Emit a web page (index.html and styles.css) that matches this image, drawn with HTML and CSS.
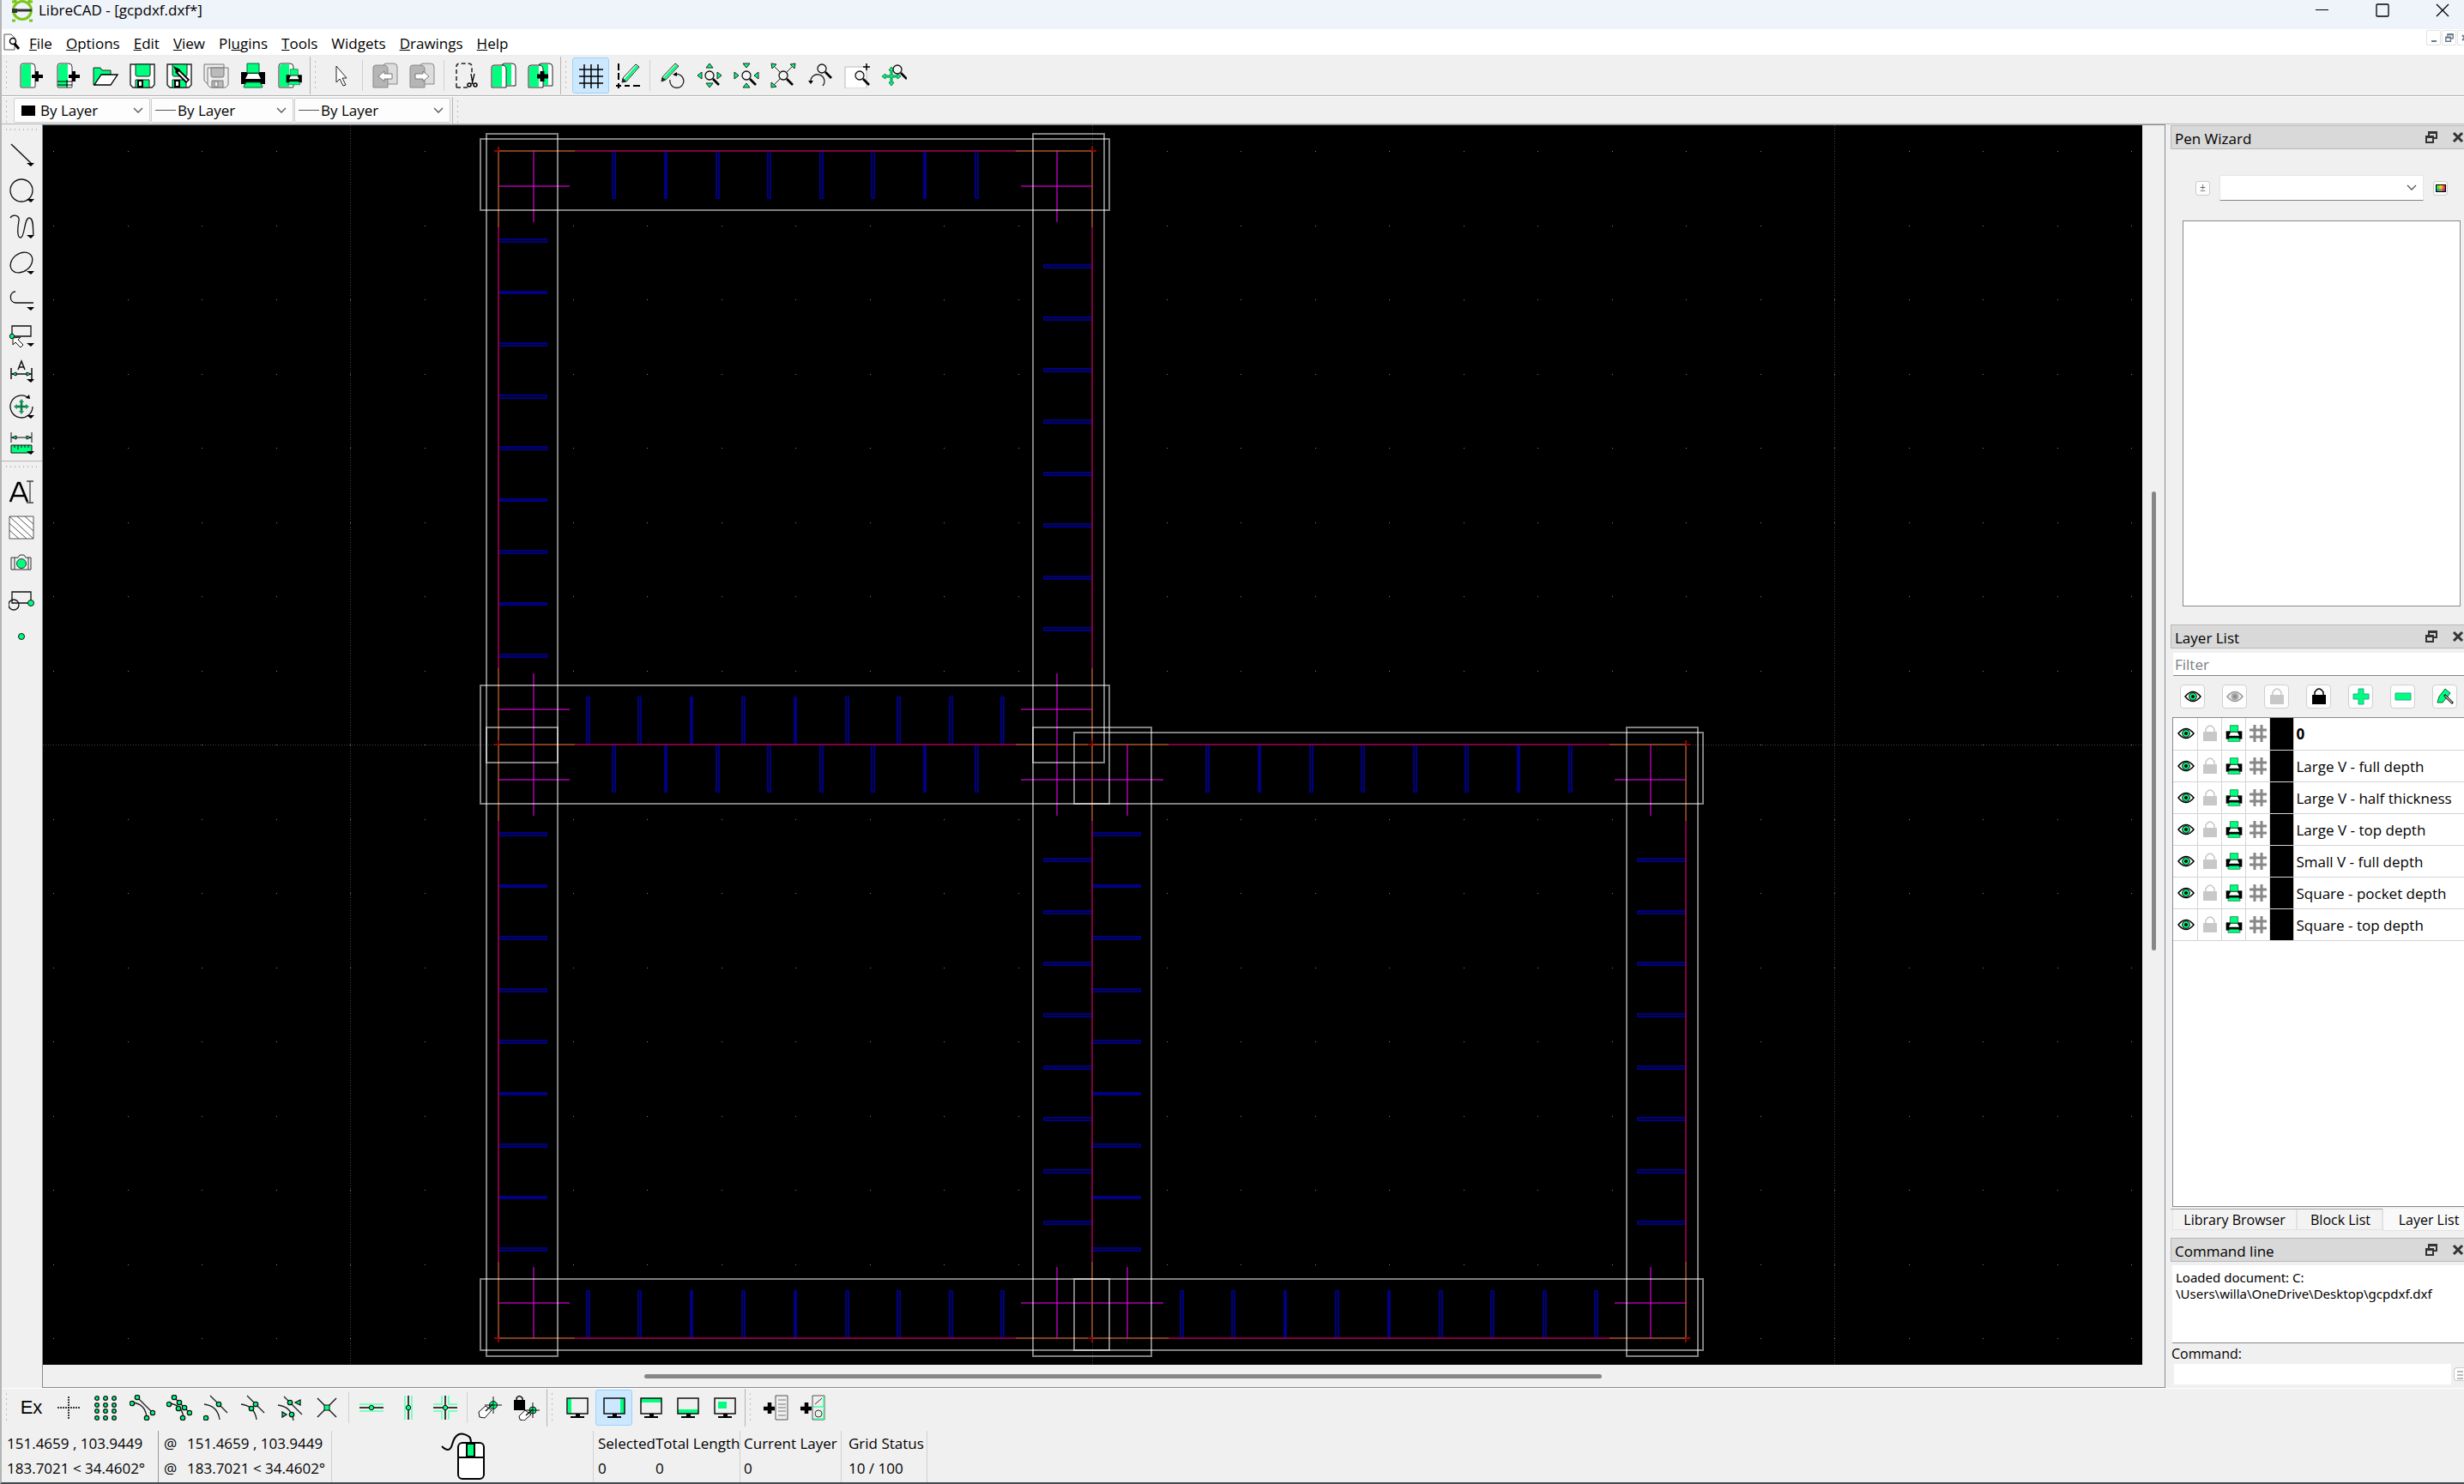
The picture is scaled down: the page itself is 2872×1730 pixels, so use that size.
FILE: index.html
```html
<!DOCTYPE html>
<html lang="en">
<head>
<meta charset="utf-8">
<title>LibreCAD - [gcpdxf.dxf*]</title>
<link rel="stylesheet" href="styles.css">
</head>
<body>
<svg class="sprite" aria-hidden="true">
  <defs>
    <symbol id="i-new" viewBox="0 0 30 30"><path d="M2 4q0-3 3-3h10q4 0 4 4v23q0 1-1 1H3q-1 0-1-1z" fill="#fff" stroke="#333"/><path d="M3 5q0-3 3-3h8v26H3z" fill="#00ff7f"/><path d="M21 10v12M15 16h13" stroke="#000" stroke-width="4"/></symbol>
    <symbol id="i-newt" viewBox="0 0 30 30"><path d="M2 4q0-3 3-3h10q4 0 4 4v23q0 1-1 1H3q-1 0-1-1z" fill="#fff" stroke="#333"/><path d="M3 5q0-3 3-3h8v26H3z" fill="#00ff7f"/><path d="M2 22h17M2 26h17M13 20v9" stroke="#000"/><path d="M21 10v12M15 16h13" stroke="#000" stroke-width="4"/></symbol>
    <symbol id="i-open" viewBox="0 0 30 30"><path d="M1 26V6h8l2 3h10v5H10L2 26z" fill="#00ff7f" stroke="#222"/><path d="M2 26l8-12h19l-8 12z" fill="#fff" stroke="#000" stroke-width="1.3"/></symbol>
    <symbol id="i-save" viewBox="0 0 30 30"><path d="M1 2h28v24l-3 3H4l-3-3z" fill="#fff" stroke="#222" stroke-width="1.4"/><path d="M7 2h17v12q0 2-2 2H9q-2 0-2-2z" fill="#00ff7f" stroke="#222"/><path d="M7 29v-9h16v9z" fill="#00ff7f" stroke="#222"/><path d="M10 21h5v7h-5z" fill="#fff" stroke="#000" stroke-width="2"/></symbol>
    <symbol id="i-saveas" viewBox="0 0 30 30"><use href="#i-save"/><path d="M12 9l13 13" stroke="#000" stroke-width="6"/><path d="M8 4l8 4-4 4z" fill="#000"/><path d="M14 11l10 10" stroke="#fff" stroke-width="2"/></symbol>
    <symbol id="i-saveall" viewBox="0 0 30 30"><path d="M1 2h23v22H4l-3-3z" fill="#eee" stroke="#777"/><path d="M5 6h24v20l-3 3H8l-3-3z" fill="#eee" stroke="#777"/><path d="M9 6h15v9q0 2-2 2H11q-2 0-2-2zM10 29v-8h13v8z" fill="#bbb" stroke="#777"/><path d="M13 22h4v6h-4z" fill="#eee" stroke="#777"/></symbol>
    <symbol id="i-print" viewBox="0 0 30 30"><path d="M1 11h28v14H1z"/><path d="M8 1h14v11H8z" fill="#00ff7f" stroke="#063"/><path d="M9 13h12l3 6H6z" fill="#fff"/><path d="M7 23h16l3 5q0 1-1 1H5q-1 0-1-1z" fill="#00ff7f" stroke="#063"/></symbol>
    <symbol id="i-preview" viewBox="0 0 30 30"><path d="M2 4q0-3 3-3h10q4 0 4 4v23q0 1-1 1H3q-1 0-1-1z" fill="#fff" stroke="#333"/><path d="M3 5q0-3 3-3h8v26H3z" fill="#00ff7f"/><g transform="translate(10 7) scale(.65)"><use href="#i-print" width="30" height="30"/></g></symbol>
    <symbol id="i-pointer" viewBox="0 0 30 30"><path d="M10 4v19l4-4 4 8 3-1-4-8h5z" fill="#fff" stroke="#222"/></symbol>
    <symbol id="i-undo" viewBox="0 0 30 30"><path d="M13 4q0-3 3-3h9q4 0 4 4v20H13z" fill="#ddd" stroke="#888"/><path d="M1 6q0-3 3-3h9q5 0 5 5v21H1z" fill="#b5b5b5" stroke="#888"/><path d="M7 16l7-6v3h9v6h-9v3z" fill="#fff" stroke="#777"/></symbol>
    <symbol id="i-redo" viewBox="0 0 30 30"><path d="M13 4q0-3 3-3h9q4 0 4 4v20H13z" fill="#ddd" stroke="#888"/><path d="M1 6q0-3 3-3h9q5 0 5 5v21H1z" fill="#b5b5b5" stroke="#888"/><path d="M23 16l-7-6v3H7v6h9v3z" fill="#fff" stroke="#777"/></symbol>
    <symbol id="i-cut" viewBox="0 0 30 30"><path d="M3 29V5q0-4 4-4h10q4 0 4 4v9M3 29h15" fill="none" stroke="#222" stroke-width="1.5" stroke-dasharray="5 3"/><path d="M20 13l2 12M24 13l-3 12" stroke="#000" stroke-width="1.3"/><circle cx="18" cy="26" r="2" fill="none" stroke="#000" stroke-width="1.5"/><circle cx="25" cy="26" r="2" fill="none" stroke="#000" stroke-width="1.5"/></symbol>
    <symbol id="i-copy" viewBox="0 0 30 30"><path d="M13 4q0-3 3-3h9q4 0 4 4v22H13z" fill="#fff" stroke="#222"/><path d="M14 2h10v24H14z" fill="#00ff7f"/><path d="M1 6q0-3 3-3h9q5 0 5 5v21H1z" fill="#fff" stroke="#222"/><path d="M2 6q0-2 2-2h9v24H2z" fill="#00ff7f"/></symbol>
    <symbol id="i-paste" viewBox="0 0 30 30"><use href="#i-copy"/><path d="M17 10v12M11 16h13" stroke="#000" stroke-width="5"/></symbol>
    <symbol id="i-grid" viewBox="0 0 30 30"><path d="M7 2v28M15 2v28M23 2v28M1 8h28M1 16h28M1 24h28" stroke="#000" stroke-width="1.5"/></symbol>
    <symbol id="i-draft" viewBox="0 0 30 30"><path d="M4 1v8M4 12v8M4 24v6M1 27h6M11 27h6M21 27h8" stroke="#000" stroke-width="2"/><path d="M24 2l4 3-15 17-5 1 1-5z" fill="#fff" stroke="#222"/><path d="M26 4L11 21" stroke="#00ff7f" stroke-width="3"/><path d="M8 23l1-5 4 4z" fill="#222"/></symbol>
    <symbol id="i-redraw" viewBox="0 0 30 30"><path d="M18 1l4 3L7 20l-5 2 1-5z" fill="#fff" stroke="#222"/><path d="M20 3L5 19" stroke="#00ff7f" stroke-width="3"/><path d="M2 22l1-5 4 3z" fill="#222"/><path d="M17 14a8 8 0 1 1-5 6" fill="none" stroke="#222" stroke-width="1.3"/><path d="M15 14l5-3v5z"/></symbol>
    <symbol id="lens" viewBox="0 0 30 30"><circle cx="15" cy="15" r="5" fill="#f4f4f4" stroke="#111" stroke-width="1.3"/><path d="M19 19l7 7" stroke="#000" stroke-width="2.6"/></symbol>
    <symbol id="i-zin" viewBox="0 0 30 30"><use href="#lens"/><path d="M15 1l4 5h-8zM15 29l4-5h-8zM1 15l5-4v8zM29 15l-5-4v8z" fill="#00ff7f" stroke="#222"/></symbol>
    <symbol id="i-zout" viewBox="0 0 30 30"><use href="#lens"/><path d="M15 6l4-5h-8zM15 24l4 5h-8zM6 15l-5-4v8zM24 15l5-4v8z" fill="#00ff7f" stroke="#222"/></symbol>
    <symbol id="i-zauto" viewBox="0 0 30 30"><path d="M3 3l9 9M27 3l-9 9M3 27l9-9" stroke="#222"/><use href="#lens"/><path d="M1 1l6 1-5 5zM29 1l-6 1 5 5zM1 29v-6l6 5z" fill="#00ff7f" stroke="#222"/></symbol>
    <symbol id="i-zprev" viewBox="0 0 30 30"><g transform="translate(2 -8)"><use href="#lens" width="30" height="30"/></g><path d="M4 23a8 8 0 1 1 14 4" fill="none" stroke="#222" stroke-width="1.3"/><path d="M1 21h6l-3 4z"/></symbol>
    <symbol id="i-zwin" viewBox="0 0 30 30"><path d="M1 5h25v25H1z" fill="#fff" stroke="#bbb"/><g transform="translate(3 0)"><use href="#lens" width="30" height="30"/></g><path d="M26 1v8M22 5h8" stroke="#000" stroke-width="1.5"/></symbol>
    <symbol id="i-zpan" viewBox="0 0 30 30"><path d="M12 5l3 4h-2v6h6v-2l4 3-4 3v-2h-6v6h2l-3 4-3-4h2v-6H5v2l-4-3 4-3v2h6V9H9z" fill="#00ff7f" stroke="#084"/><g transform="translate(4 -7)"><use href="#lens" width="30" height="30"/></g></symbol>

    <symbol id="drop" viewBox="0 0 30 30"><path d="M21 25h9l-4 4z"/></symbol>
    <symbol id="i-line" viewBox="0 0 30 30"><path d="M3 3l24 23" stroke="#111" stroke-width="1.5"/><use href="#drop"/></symbol>
    <symbol id="i-circle" viewBox="0 0 30 30"><circle cx="15" cy="15" r="13" fill="none" stroke="#111" stroke-width="1.3"/><use href="#drop"/></symbol>
    <symbol id="i-curve" viewBox="0 0 30 30"><path d="M2 5c3-5 11-3 10 3s-3 20 2 20S18 5 24 5s4 15 5 20" fill="none" stroke="#111" stroke-width="1.3"/><use href="#drop"/></symbol>
    <symbol id="i-ellipse" viewBox="0 0 30 30"><ellipse cx="15" cy="15" rx="14" ry="10.500" transform="rotate(-38 15 15)" fill="none" stroke="#111" stroke-width="1.3"/><use href="#drop"/></symbol>
    <symbol id="i-poly" viewBox="0 0 30 30"><path d="M8 7c-7 0-8 12 0 13h21" fill="none" stroke="#111" stroke-width="1.3"/><use href="#drop"/></symbol>
    <symbol id="i-select" viewBox="0 0 30 30"><path d="M4 5h22v12H4z" fill="none" stroke="#111" stroke-width="1.3"/><circle cx="4" cy="17" r="2.700" fill="#00ff7f" stroke="#111"/><path d="M5 19l9-1-3 3 6 6-3 3-6-6-3 3z" fill="#fff" stroke="#111"/><use href="#drop"/></symbol>
    <symbol id="i-dim" viewBox="0 0 30 30"><path d="M3 12v13M27 12v13M3 19h24M11 14l4-10 4 10M12 11h6" fill="none" stroke="#111" stroke-width="1.500"/><path d="M4 19l5-2v4zM26 19l-5-2v4z" fill="#00ff7f" stroke="#111"/><use href="#drop"/></symbol>
    <symbol id="i-modify" viewBox="0 0 30 30"><path d="M28 15a13 13 0 1 1-6-11" fill="none" stroke="#111" stroke-width="1.300"/><path d="M25 6l-5-1 4-4z"/><path d="M15 8v14M8 15h14" stroke="#087a45" stroke-width="2.500"/><path d="M15 6l3 4h-6zM15 24l3-4h-6zM6 15l4-3v6zM24 15l-4-3v6z" fill="#1c9b60"/><use href="#drop"/></symbol>
    <symbol id="i-measure" viewBox="0 0 30 30"><path d="M3 3v12M27 3v12M3 9h24" stroke="#111"/><path d="M4 9l5-2v4zM26 9l-5-2v4z" fill="#00ff7f" stroke="#111"/><path d="M3 18h24v9H3z" fill="#00ff7f" stroke="#111"/><path d="M7 18v3M11 18v5M15 18v3M19 18v3M23 18v3" stroke="#111"/><use href="#drop"/></symbol>
    <symbol id="i-text" viewBox="0 0 30 30"><path d="M2 27L11 5h2l9 22M5 20h14" fill="none" stroke="#000" stroke-width="2.600"/><path d="M25 3v25M21 3h8M21 28h8" stroke="#444" stroke-width="1.300"/></symbol>
    <symbol id="i-hatch" viewBox="0 0 30 30"><path d="M1 2h28v26H1z" fill="#fff" stroke="#555"/><path d="M1 18l11 10M1 10l20 18M1 2l28 26M10 2l19 17M19 2l10 9" stroke="#555"/></symbol>
    <symbol id="i-image" viewBox="0 0 30 30"><path d="M3 8h8l2-3h5l2 3h6v14H3zM7 8v14M23 8v14" fill="#eee" stroke="#333"/><circle cx="15" cy="15" r="5.500" fill="#00ff7f" stroke="#333"/></symbol>
    <symbol id="i-block" viewBox="0 0 30 30"><path d="M4 6h22v13H4z" fill="none" stroke="#111" stroke-width="1.300"/><circle cx="6" cy="21" r="6" fill="none" stroke="#111" stroke-width="1.300"/><circle cx="26" cy="19" r="3.500" fill="#00ff7f" stroke="#111"/></symbol>
    <symbol id="i-point" viewBox="0 0 30 30"><circle cx="15" cy="16" r="3.500" fill="#00ff7f" stroke="#111"/></symbol>

    <symbol id="i-cross" viewBox="0 0 30 30"><path d="M15 2v26M2 15h26" stroke="#000" stroke-width="1.500" stroke-dasharray="2 1"/></symbol>
    <symbol id="i-dots" viewBox="0 0 30 30"><g fill="#00ff7f" stroke="#111" stroke-width="1.300"><circle cx="5" cy="4" r="2.300"/><circle cx="15" cy="4" r="2.300"/><circle cx="25" cy="4" r="2.300"/><circle cx="5" cy="12" r="2.300"/><circle cx="15" cy="12" r="2.300"/><circle cx="25" cy="12" r="2.300"/><circle cx="5" cy="19" r="2.300"/><circle cx="15" cy="19" r="2.300"/><circle cx="25" cy="19" r="2.300"/><circle cx="5" cy="27" r="2.300"/><circle cx="15" cy="27" r="2.300"/><circle cx="25" cy="27" r="2.300"/></g></symbol>
    <symbol id="i-send" viewBox="0 0 30 30"><path d="M9 3l18 18M3 9q15 1 17 17" fill="none" stroke="#222" stroke-width="1.300"/><g fill="#00ff7f" stroke="#111" stroke-width="1.300"><circle cx="9" cy="3" r="2.700"/><circle cx="27" cy="21" r="2.700"/><circle cx="3" cy="10" r="2.700"/><circle cx="20" cy="27" r="2.700"/></g></symbol>
    <symbol id="i-son" viewBox="0 0 30 30"><path d="M9 3l18 18M3 10q15 1 17 17" fill="none" stroke="#222" stroke-width="1.300"/><g fill="#00ff7f" stroke="#111" stroke-width="1.300"><circle cx="9" cy="3" r="2.700"/><circle cx="15" cy="9" r="2.700"/><circle cx="21" cy="15" r="2.700"/><circle cx="27" cy="21" r="2.700"/><circle cx="3" cy="11" r="2.700"/><circle cx="14" cy="16" r="2.700"/><circle cx="19" cy="27" r="2.700"/></g></symbol>
    <symbol id="i-scen" viewBox="0 0 30 30"><path d="M8 1l20 20M1 11q16 2 18 18" fill="none" stroke="#222" stroke-width="1.300"/><g fill="#00ff7f" stroke="#111" stroke-width="1.300"><circle cx="18" cy="11" r="2.700"/><circle cx="3" cy="27" r="2.700"/></g></symbol>
    <symbol id="i-smid" viewBox="0 0 30 30"><path d="M8 1l20 20M1 11q16 2 18 18" fill="none" stroke="#222" stroke-width="1.300"/><g fill="#00ff7f" stroke="#111" stroke-width="1.300"><circle cx="18" cy="11" r="2.700"/><circle cx="13" cy="16" r="2.700"/></g></symbol>
    <symbol id="i-sdist" viewBox="0 0 30 30"><path d="M8 2l21 21M1 12q16 2 18 18" fill="none" stroke="#222" stroke-width="1.300"/><g fill="#00ff7f" stroke="#111" stroke-width="1.300"><circle cx="15" cy="9" r="2.700"/><circle cx="17" cy="23" r="2.700"/><path d="M21 9l6-3v6zM11 23l-5-3v6z"/></g></symbol>
    <symbol id="i-sint" viewBox="0 0 30 30"><path d="M4 4l22 22M26 4L4 26" stroke="#111" stroke-width="1.300"/><path d="M12 12h6v6h-6z" fill="#00ff7f" stroke="#111"/></symbol>
    <symbol id="i-rhor" viewBox="0 0 30 30"><path d="M1 11h28M1 19h28" stroke="#7dffc0" stroke-width="2"/><path d="M1 15h28" stroke="#000" stroke-width="1.500"/><circle cx="15" cy="15" r="2.700" fill="#00ff7f" stroke="#111"/></symbol>
    <symbol id="i-rver" viewBox="0 0 30 30"><path d="M11 1v28M19 1v28" stroke="#7dffc0" stroke-width="2"/><path d="M15 1v28" stroke="#000" stroke-width="1.500"/><circle cx="15" cy="15" r="2.700" fill="#00ff7f" stroke="#111"/></symbol>
    <symbol id="i-rort" viewBox="0 0 30 30"><path d="M11 1v10H1M19 1v10h10M11 29V19H1M19 29V19h10" fill="none" stroke="#7dffc0" stroke-width="2"/><path d="M15 1v28M1 15h28" stroke="#000" stroke-width="1.500"/><circle cx="15" cy="15" r="2.700" fill="#00ff7f" stroke="#111"/></symbol>
    <symbol id="i-rel" viewBox="0 0 30 30"><circle cx="19" cy="12" r="4.500" fill="#00ff7f" stroke="#111"/><path d="M19 2v20M9 12h20" stroke="#111"/><path d="M2 20l8-7 7 5-8 9-6-1z" fill="#fff" stroke="#111"/><path d="M10 19l8-8" stroke="#111" stroke-width="1.500"/></symbol>
    <symbol id="i-relock" viewBox="0 0 30 30"><path d="M3 7V4q3-5 7 0v3" fill="none" stroke="#111" stroke-width="1.500"/><path d="M0 6h13v12H0z"/><circle cx="22" cy="18" r="4" fill="#00ff7f" stroke="#111"/><path d="M22 9v18M13 18h17" stroke="#111"/><path d="M6 25l7-7 7 5-8 7-5-1z" fill="#fff" stroke="#111"/><path d="M14 24l8-7" stroke="#111" stroke-width="1.500"/></symbol>
    <symbol id="mon" viewBox="0 0 30 30"><path d="M3 4h24v18H3z" fill="none" stroke="#111" stroke-width="1.500"/><path d="M13 22h5v3h-5z"/><path d="M7 26h16" stroke="#000" stroke-width="2"/></symbol>
    <symbol id="i-dl" viewBox="0 0 30 30"><path d="M4 4h4v18H4z" fill="#00ff7f"/><use href="#mon"/></symbol>
    <symbol id="i-dr" viewBox="0 0 30 30"><path d="M22 4h5v18h-5z" fill="#00ff7f"/><use href="#mon"/></symbol>
    <symbol id="i-dt" viewBox="0 0 30 30"><path d="M3 4h24v5H3z" fill="#00ff7f"/><use href="#mon"/></symbol>
    <symbol id="i-db" viewBox="0 0 30 30"><path d="M3 17h24v5H3z" fill="#00ff7f"/><use href="#mon"/></symbol>
    <symbol id="i-df" viewBox="0 0 30 30"><path d="M7 8h10v8H7z" fill="#00ff7f"/><use href="#mon"/></symbol>
    <symbol id="i-addm" viewBox="0 0 30 30"><path d="M1 16h13M8 9v13" stroke="#000" stroke-width="4.500"/><path d="M15 1h14v28H15z" fill="#eee" stroke="#555"/><path d="M18 6h9M18 11h9M18 15h9M18 19h9M18 24h9" stroke="#777"/></symbol>
    <symbol id="i-addt" viewBox="0 0 30 30"><path d="M1 16h13M8 9v13" stroke="#000" stroke-width="4.500"/><path d="M15 1h14v28H15z" fill="#eee" stroke="#555"/><path d="M16 14h12V2M16 28h12V17" fill="none" stroke="#3dff9c" stroke-width="1.500"/><path d="M18 11l8-7" stroke="#333"/><circle cx="22" cy="22" r="4" fill="none" stroke="#333"/></symbol>
    <symbol id="i-eye" viewBox="0 0 20 20"><path d="M1 10q9-11 18 0q-9 11-18 0z" fill="#fff" stroke="#000" stroke-width="1.500"/><circle cx="10" cy="10" r="4.300" fill="#00ff7f" stroke="#000"/><circle cx="10" cy="10" r="2"/></symbol>
    <symbol id="i-eyeoff" viewBox="0 0 20 20"><path d="M1 10q9-11 18 0q-9 11-18 0z" fill="#eee" stroke="#999" stroke-width="1.500"/><circle cx="10" cy="10" r="4.500" fill="#aaa"/><circle cx="10" cy="10" r="2" fill="#888"/></symbol>
    <symbol id="i-lock" viewBox="0 0 20 20"><path d="M5 10V5q5-8 10 0v5" fill="none" stroke="currentColor" stroke-width="1.500"/><path d="M2 8h16v11H2z" fill="currentColor"/></symbol>
    <symbol id="i-hash" viewBox="0 0 20 20"><path d="M6 0v20M14 0v20M0 6h20M0 14h20" stroke="#888" stroke-width="3"/></symbol>
    <symbol id="i-plus" viewBox="0 0 20 20"><path d="M7 1h6v6h6v6h-6v6H7v-6H1V7h6z" fill="#00ff7f" stroke="#2a9"/></symbol>
    <symbol id="i-minus" viewBox="0 0 20 20"><path d="M1 6h18v8H1z" fill="#00ff7f" stroke="#2a9"/></symbol>
    <symbol id="i-edit" viewBox="0 0 20 20"><path d="M10 1l6 5-9 11H1l2-7z" fill="#00ff7f" stroke="#063"/><path d="M9 8l10 10" stroke="#222" stroke-width="3"/><path d="M10 9l8 8" stroke="#fff"/></symbol>
    <symbol id="i-float" viewBox="0 0 14 14"><path d="M4 5V1h9v7H9M4 2h9" fill="none" stroke="currentColor" stroke-width="2"/><path d="M1 6h8v7H1zM1 7h8" fill="none" stroke="currentColor" stroke-width="2"/></symbol>
    <symbol id="i-x" viewBox="0 0 14 14"><path d="M2 2l10 10M12 2L2 12" stroke="#333" stroke-width="3"/></symbol>
    <symbol id="i-chev" viewBox="0 0 14 14"><path d="M2 4l5 5 5-5" fill="none" stroke="#555" stroke-width="1.300"/></symbol>
  </defs>
</svg>

<header class="titlebar">
  <svg class="logo" viewBox="0 0 26 26"><circle cx="13" cy="12" r="10.500" fill="none" stroke="#7cc618" stroke-width="3"/><path d="M1 2h4v-2M25 2h-4v-2M1 24h4M21 24h4" stroke="#7cc618" stroke-width="3"/><path d="M1 12h23" stroke="#333" stroke-width="3"/><path d="M1 10h6v5H1z" fill="#333"/></svg>
  <h1>LibreCAD - [gcpdxf.dxf*]</h1>
  <div class="wincontrols">
    <button aria-label="Minimize"><svg viewBox="0 0 16 16"><path d="M0 7.500h15" stroke="#000"/></svg></button>
    <button aria-label="Maximize"><svg viewBox="0 0 16 16"><rect x="1" y="1" width="14" height="14" rx="1" fill="none" stroke="#000" stroke-width="1.300"/></svg></button>
    <button aria-label="Close"><svg viewBox="0 0 16 16"><path d="M1 1l14 14M15 1L1 15" stroke="#000" stroke-width="1.300"/></svg></button>
  </div>
</header>

<nav class="menubar">
  <svg class="docicon" viewBox="0 0 20 20"><path d="M1 1h8l4 4v14H1z" fill="#fff" stroke="#555"/><circle cx="11" cy="9" r="3.500" fill="#fff" stroke="#000" stroke-width="1.500"/><path d="M13 12l5 6" stroke="#000" stroke-width="3"/></svg>
  <button><u>F</u>ile</button><button><u>O</u>ptions</button><button><u>E</u>dit</button><button><u>V</u>iew</button><button>Pl<u>u</u>gins</button><button><u>T</u>ools</button><button>Widgets</button><button><u>D</u>rawings</button><button><u>H</u>elp</button>
  <div class="mdi">
    <button aria-label="Minimize document"><svg viewBox="0 0 14 14"><path d="M4 11h6" stroke="#6a7a8c" stroke-width="2"/></svg></button>
    <button aria-label="Restore document"><svg viewBox="-3 -3 20 20"><use href="#i-float" width="14" height="14"/></svg></button>
    <button class="cut" aria-label="Close document"><svg viewBox="0 0 14 14"><path d="M5 4l6 6M11 4l-6 6" stroke="#6a7a8c" stroke-width="2"/></svg></button>
  </div>
</nav>

<div class="toolrow">
  <div class="toolbar">
    <i class="handle"></i>
    <button aria-label="New"><svg><use href="#i-new"/></svg></button>
    <button aria-label="New from template"><svg><use href="#i-newt"/></svg></button>
    <button aria-label="Open"><svg><use href="#i-open"/></svg></button>
    <button aria-label="Save"><svg><use href="#i-save"/></svg></button>
    <button aria-label="Save as"><svg><use href="#i-saveas"/></svg></button>
    <button aria-label="Save all"><svg><use href="#i-saveall"/></svg></button>
    <button aria-label="Print"><svg><use href="#i-print"/></svg></button>
    <button aria-label="Print preview"><svg><use href="#i-preview"/></svg></button>
  </div>
  <div class="toolbar">
    <i class="handle"></i>
    <button aria-label="Selection pointer"><svg><use href="#i-pointer"/></svg></button>
    <i class="sep"></i>
    <button aria-label="Undo"><svg><use href="#i-undo"/></svg></button>
    <button aria-label="Redo"><svg><use href="#i-redo"/></svg></button>
    <i class="sep"></i>
    <button aria-label="Cut"><svg><use href="#i-cut"/></svg></button>
    <button aria-label="Copy"><svg><use href="#i-copy"/></svg></button>
    <button aria-label="Paste"><svg><use href="#i-paste"/></svg></button>
  </div>
  <div class="toolbar last">
    <i class="handle"></i>
    <button class="on" aria-label="Grid"><svg><use href="#i-grid"/></svg></button>
    <button aria-label="Draft"><svg><use href="#i-draft"/></svg></button>
    <i class="sep"></i>
    <button aria-label="Redraw"><svg><use href="#i-redraw"/></svg></button>
    <button aria-label="Zoom in"><svg><use href="#i-zin"/></svg></button>
    <button aria-label="Zoom out"><svg><use href="#i-zout"/></svg></button>
    <button aria-label="Auto zoom"><svg><use href="#i-zauto"/></svg></button>
    <button aria-label="Previous view"><svg><use href="#i-zprev"/></svg></button>
    <button aria-label="Window zoom"><svg><use href="#i-zwin"/></svg></button>
    <button aria-label="Zoom panning"><svg><use href="#i-zpan"/></svg></button>
  </div>
</div>

<div class="penrow">
  <div class="pens">
    <i class="handle"></i>
    <label class="combo c1"><span class="swatch"></span><select aria-label="Color"><option>By Layer</option></select><svg><use href="#i-chev"/></svg></label>
    <label class="combo c2"><span class="dash"></span><select aria-label="Width"><option>By Layer</option></select><svg><use href="#i-chev"/></svg></label>
    <label class="combo c3"><span class="dash"></span><select aria-label="Line type"><option>By Layer</option></select><svg><use href="#i-chev"/></svg></label>
  </div>
  <i class="handle"></i>
</div>

<main>
  <aside class="tools">
    <div class="toolcol">
      <i class="hhandle"></i>
      <button aria-label="Line"><svg><use href="#i-line"/></svg></button>
      <button aria-label="Circle"><svg><use href="#i-circle"/></svg></button>
      <button aria-label="Curve"><svg><use href="#i-curve"/></svg></button>
      <button aria-label="Ellipse"><svg><use href="#i-ellipse"/></svg></button>
      <button aria-label="Polyline"><svg><use href="#i-poly"/></svg></button>
      <button aria-label="Select"><svg><use href="#i-select"/></svg></button>
      <button aria-label="Dimension"><svg><use href="#i-dim"/></svg></button>
      <button aria-label="Modify"><svg><use href="#i-modify"/></svg></button>
      <button aria-label="Info"><svg><use href="#i-measure"/></svg></button>
    </div>
    <div class="toolcol">
      <i class="hhandle"></i>
      <button aria-label="Text"><svg><use href="#i-text"/></svg></button>
      <button aria-label="Hatch"><svg><use href="#i-hatch"/></svg></button>
      <button aria-label="Image"><svg><use href="#i-image"/></svg></button>
      <button aria-label="Block"><svg><use href="#i-block"/></svg></button>
      <button aria-label="Point"><svg><use href="#i-point"/></svg></button>
    </div>
  </aside>

  <section class="view">
    <svg class="drawing" viewBox="50 146 2447 1445" preserveAspectRatio="xMidYMid slice" role="img" aria-label="Drawing">
      <defs>
        <pattern id="gdots" x="62" y="176" width="173" height="173" patternUnits="userSpaceOnUse"><path d="M0 0h1v1h-1zM87 0h1v1h-1zM0 87h1v1h-1zM87 87h1v1h-1z" fill="#808080"/></pattern>
        <g id="cell" fill="none" stroke-width="2">
          <g stroke="#000082">
            <path d="M133 1v54h3V1M194 1v54h2V1M254 1v54h3V1M314 1v54h3V1M375 1v54h3V1M435 1v54h3V1M496 1v54h2V1M556 1v54h3V1"/>
            <path d="M103 691v-54h3v54M163 691v-54h3v54M224 691v-54h2v54M284 691v-54h3v54M345 691v-54h2v54M405 691v-54h3v54M465 691v-54h3v54M526 691v-54h3v54M586 691v-54h3v54"/>
            <path d="M1 103h55v3H1M1 164h55v2H1M1 224h55v3H1M1 285h55v3H1M1 345h55v3H1M1 406h55v2H1M1 466h55v3H1M1 527h55v2H1M1 587h55v3H1"/>
            <path d="M691 133h-55v3h55M691 194h-55v3h55M691 254h-55v3h55M691 314h-55v3h55M691 375h-55v3h55M691 435h-55v3h55M691 496h-55v3h55M691 556h-55v3h55"/>
          </g>
          <path d="M0 0h692v692H0z" stroke="#800040"/>
          <path d="M0 89V0h89M603 0h89v89M692 603v89h-89M89 692H0v-89" stroke="#804020"/>
          <g stroke="#f0f" stroke-opacity=".5"><path d="M41 0v83"/><path d="M0 41h83"/><path d="M651 0v83"/><path d="M609 41h83"/><path d="M41 609v83"/><path d="M0 651h83"/><path d="M651 609v83"/><path d="M609 651h83"/></g>
          <path d="M-5 0h5M0-5v5M692-5v5M692 0h5M-5 692h5M0 692v5M692 692h5M692 692v5" stroke="#900"/>
        </g>
      </defs>
      <rect x="50" y="146" width="2447" height="1445"/>
      <rect x="50" y="146" width="2447" height="1445" fill="url(#gdots)"/>
      <path d="M408.500 146v1445M1273.500 146v1445M2138.500 146v1445M50 868.500h2447" stroke="#444" stroke-dasharray="1 2"/>
      <use href="#cell" x="581" y="176"/><use href="#cell" x="581" y="868"/><use href="#cell" x="1273" y="868"/>
      <g fill="none" stroke="#fff" stroke-opacity=".5" stroke-width="2">
        <path d="M567 156h83v733h-83z"/><path d="M1204 156h83v733h-83z"/><path d="M560 162h733v83H560z"/>
        <path d="M560 799h733v138H560z"/><path d="M1252 854h733v83h-733z"/>
        <path d="M567 848h83v733h-83z"/><path d="M1204 848h138v733h-138z"/><path d="M1896 848h83v733h-83z"/>
        <path d="M560 1491h733v83H560z"/><path d="M1252 1491h733v83h-733z"/>
      </g>
    </svg>
    <div class="vscroll"><i></i></div>
    <div class="hscroll"><i></i></div>
  </section>

  <aside class="dock">
    <header class="docktitle"><h2>Pen Wizard</h2><button aria-label="Float"><svg><use href="#i-float"/></svg></button><button aria-label="Close"><svg><use href="#i-x"/></svg></button></header>
    <div class="penbody">
      <div class="penpick">
        <button class="mini" aria-label="Add to favourites">±</button>
        <label class="combo wide"><select aria-label="Pen colour"><option></option></select><svg><use href="#i-chev"/></svg></label>
        <button class="mini" aria-label="Pick colour"><i class="rainbow"></i></button>
      </div>
      <div class="penlist"></div>
    </div>

    <header class="docktitle"><h2>Layer List</h2><button aria-label="Float"><svg><use href="#i-float"/></svg></button><button aria-label="Close"><svg><use href="#i-x"/></svg></button></header>
    <input class="filter" type="text" placeholder="Filter" aria-label="Filter">
    <div class="layerbtns">
      <button aria-label="Show all"><svg><use href="#i-eye"/></svg></button>
      <button aria-label="Hide all"><svg><use href="#i-eyeoff"/></svg></button>
      <button class="pale" aria-label="Unlock all"><svg><use href="#i-lock"/></svg></button>
      <button aria-label="Lock all"><svg><use href="#i-lock"/></svg></button>
      <button aria-label="Add layer"><svg><use href="#i-plus"/></svg></button>
      <button aria-label="Remove layer"><svg><use href="#i-minus"/></svg></button>
      <button aria-label="Edit layer"><svg><use href="#i-edit"/></svg></button>
    </div>
    <div class="layers">
      <table>
        <tbody>
          <tr><td><svg><use href="#i-eye"/></svg></td><td class="pale"><svg><use href="#i-lock"/></svg></td><td><svg><use href="#i-print"/></svg></td><td><svg><use href="#i-hash"/></svg></td><td class="color"></td><th>0</th></tr>
          <tr><td><svg><use href="#i-eye"/></svg></td><td class="pale"><svg><use href="#i-lock"/></svg></td><td><svg><use href="#i-print"/></svg></td><td><svg><use href="#i-hash"/></svg></td><td class="color"></td><td class="name">Large V - full depth</td></tr>
          <tr><td><svg><use href="#i-eye"/></svg></td><td class="pale"><svg><use href="#i-lock"/></svg></td><td><svg><use href="#i-print"/></svg></td><td><svg><use href="#i-hash"/></svg></td><td class="color"></td><td class="name">Large V - half thickness</td></tr>
          <tr><td><svg><use href="#i-eye"/></svg></td><td class="pale"><svg><use href="#i-lock"/></svg></td><td><svg><use href="#i-print"/></svg></td><td><svg><use href="#i-hash"/></svg></td><td class="color"></td><td class="name">Large V - top depth</td></tr>
          <tr><td><svg><use href="#i-eye"/></svg></td><td class="pale"><svg><use href="#i-lock"/></svg></td><td><svg><use href="#i-print"/></svg></td><td><svg><use href="#i-hash"/></svg></td><td class="color"></td><td class="name">Small V - full depth</td></tr>
          <tr><td><svg><use href="#i-eye"/></svg></td><td class="pale"><svg><use href="#i-lock"/></svg></td><td><svg><use href="#i-print"/></svg></td><td><svg><use href="#i-hash"/></svg></td><td class="color"></td><td class="name">Square - pocket depth</td></tr>
          <tr><td><svg><use href="#i-eye"/></svg></td><td class="pale"><svg><use href="#i-lock"/></svg></td><td><svg><use href="#i-print"/></svg></td><td><svg><use href="#i-hash"/></svg></td><td class="color"></td><td class="name">Square - top depth</td></tr>
        </tbody>
      </table>
    </div>
    <div class="tabs"><button>Library Browser</button><button>Block List</button><button class="active">Layer List</button></div>

    <header class="docktitle"><h2>Command line</h2><button aria-label="Float"><svg><use href="#i-float"/></svg></button><button aria-label="Close"><svg><use href="#i-x"/></svg></button></header>
    <div class="log">Loaded document: C:<br>\Users\willa\OneDrive\Desktop\gcpdxf.dxf</div>
    <label class="cmdlabel" for="cmd">Command:</label>
    <div class="cmdrow"><input id="cmd" type="text"><button aria-label="Command options"><svg viewBox="0 0 8 16"><path d="M1 4h7M1 8h7M1 12h7" stroke="#bbb" stroke-width="2"/></svg></button></div>
  </aside>
</main>

<div class="toolrow bottom">
  <div class="toolbar">
    <i class="handle"></i>
    <button class="ex">Ex</button>
    <button aria-label="Free snap"><svg><use href="#i-cross"/></svg></button>
    <button aria-label="Snap on grid"><svg><use href="#i-dots"/></svg></button>
    <button aria-label="Snap on endpoints"><svg><use href="#i-send"/></svg></button>
    <button aria-label="Snap on entity"><svg><use href="#i-son"/></svg></button>
    <button aria-label="Snap center"><svg><use href="#i-scen"/></svg></button>
    <button aria-label="Snap middle"><svg><use href="#i-smid"/></svg></button>
    <button aria-label="Snap distance"><svg><use href="#i-sdist"/></svg></button>
    <button aria-label="Snap intersection"><svg><use href="#i-sint"/></svg></button>
    <i class="sep"></i>
    <button aria-label="Restrict horizontal"><svg><use href="#i-rhor"/></svg></button>
    <button aria-label="Restrict vertical"><svg><use href="#i-rver"/></svg></button>
    <button aria-label="Restrict orthogonal"><svg><use href="#i-rort"/></svg></button>
    <i class="sep"></i>
    <button aria-label="Set relative zero"><svg><use href="#i-rel"/></svg></button>
    <button aria-label="Lock relative zero"><svg><use href="#i-relock"/></svg></button>
  </div>
  <div class="toolbar">
    <i class="handle"></i>
    <button aria-label="Left dock"><svg><use href="#i-dl"/></svg></button>
    <button class="on" aria-label="Right dock"><svg><use href="#i-dr"/></svg></button>
    <button aria-label="Top dock"><svg><use href="#i-dt"/></svg></button>
    <button aria-label="Bottom dock"><svg><use href="#i-db"/></svg></button>
    <button aria-label="Floating dock"><svg><use href="#i-df"/></svg></button>
  </div>
  <div class="toolbar last">
    <i class="handle"></i>
    <button aria-label="Menu creator"><svg><use href="#i-addm"/></svg></button>
    <button aria-label="Toolbar creator"><svg><use href="#i-addt"/></svg></button>
  </div>
</div>

<footer class="status">
  <div class="cellbox abs"><span>151.4659 , 103.9449</span><span>183.7021 &lt; 34.4602°</span></div>
  <div class="cellbox rel"><span>@</span><span>151.4659 , 103.9449</span><span>@</span><span>183.7021 &lt; 34.4602°</span></div>
  <div class="cellbox mouse"><svg viewBox="0 0 52 56"><path d="M1 16q9 9 12-2q5-19 20-9q2 2 2 7" fill="none" stroke="#000" stroke-width="2"/><rect x="20" y="12" width="30" height="42" rx="5" fill="#fff" stroke="#000" stroke-width="2"/><path d="M20 29h30" stroke="#000" stroke-width="2"/><path d="M30 13h9v15h-9z" fill="#00ff7f" stroke="#000" stroke-width="2"/></svg></div>
  <div class="cellbox sel"><span>Selected</span><span>Total Length</span><span>0</span><span>0</span></div>
  <div class="cellbox layer"><span>Current Layer</span><span>0</span></div>
  <div class="cellbox gridst"><span>Grid Status</span><span>10 / 100</span></div>
</footer>
</body>
</html>
```
FILE: styles.css
```css
* { box-sizing: border-box; }

body {
  margin: 0;
  height: 100vh;
  display: flex;
  flex-direction: column;
  overflow: hidden;
  background: #f0f0f0;
  border-left: 2px solid #b5b5b5;
  border-bottom: 2px solid #45494d;
  color: #000;
  font: 17px/20px "Open Sans", "Noto Sans", sans-serif;
}

button, input, select { font: inherit; color: inherit; }
button { border: 0; padding: 0; background: none; display: grid; place-items: center; }
svg { display: block; }
h1, h2 { margin: 0; font: inherit; }
.sprite { display: none; }

/* Title and menu */
.titlebar { height: 34px; display: flex; padding-left: 11px; background: #eff3fa; }
.logo { width: 26px; height: 26px; }
.titlebar h1 { margin: 2px 0 0 6px; }
.wincontrols { margin-left: auto; display: flex; gap: 54px; padding: 4px 17px 0 0; height: 20px; }
.wincontrols svg { width: 16px; height: 16px; }

.menubar { height: 32px; display: flex; align-items: center; background: #fff; border-bottom: 2px solid #eee; padding-left: 2px; }
.docicon { width: 20px; height: 20px; margin-right: 2px; }
.menubar > button { padding: 4px 8px 0; display: block; }
.mdi { margin-left: auto; align-self: flex-start; display: flex; gap: 1px; padding-top: 1px; color: #6a7a8c; }
.mdi button { width: 17px; height: 18px; border: 1px solid #e2e2e2; border-radius: 2px; }
.mdi svg { width: 14px; height: 14px; }
.mdi .cut { width: 8px; border-right: 0; overflow: hidden; place-items: center start; }

/* Tool bars */
.toolrow { height: 46px; display: flex; padding-bottom: 1px; border-bottom: 1px solid #b5b5b5; }
.toolbar { display: flex; align-items: center; padding-right: 2px; border-right: 1px solid #b5b5b5; }
.toolbar.last { border: 0; }
.toolbar button { width: 43px; height: 42px; }
.toolbar svg { width: 30px; height: 30px; }
.toolbar .on { background: #cce8ff; border: 1px solid #99d1ff; border-radius: 3px; }
.handle { width: 3px; height: 38px; margin: 0 6px 0 4px; background: radial-gradient(circle, #bbb 1px, transparent 1px) 0 0 / 3px 6px; }
.sep { width: 1px; height: 36px; margin: 0 4px; background: #d0d0d0; }
.bottom { border-bottom: 0; border-top: 1px solid #fff; }
.bottom .ex { font: 22px/24px "Liberation Sans", Arial, sans-serif; }

.penrow { height: 33px; display: flex; align-items: center; border-bottom: 1px solid #b5b5b5; border-top: 1px solid #fff; }
.pens { display: flex; gap: 1px; height: 100%; align-items: center; padding: 0 2px 0 0; border-right: 1px solid #b5b5b5; }
.penrow .handle { height: 28px; }
.combo { display: grid; grid-template-columns: 1fr; align-items: center; background: #fdfdfd; border: 1px solid #d0d0d0; border-radius: 2px; height: 29px; }
.combo > * { grid-area: 1 / 1; }
.combo select { appearance: none; border: 0; background: none; width: 100%; height: 27px; padding: 0 0 0 30px; outline: 0; }
.combo svg { width: 14px; height: 14px; justify-self: end; margin-right: 6px; pointer-events: none; }
.c1 { width: 159px; }
.c2 { width: 166px; }
.c3 { width: 182px; }
.swatch { width: 16px; height: 12px; margin-left: 8px; background: #000; }
.dash { width: 24px; height: 1px; margin-left: 4px; background: #555; }

/* Workspace */
main { flex: 1; min-height: 0; display: flex; }
.tools { width: 47px; }
.toolcol { border-bottom: 1px solid #b5b5b5; display: flex; flex-direction: column; align-items: center; padding-right: 1px; }
.toolcol:last-child { border: 0; }
.hhandle { width: 40px; height: 4px; margin: 4px 0 6px; background: radial-gradient(circle, #bbb 1px, transparent 1px) 0 0 / 5px 4px; }
.toolcol button { width: 42px; height: 42px; }
.toolcol svg { width: 30px; height: 30px; }

.view {
  flex: 1;
  min-width: 0;
  display: grid;
  grid-template-columns: minmax(0, 1fr) 26px;
  grid-template-rows: minmax(0, 1fr) 26px;
  border: 1px solid #868a92;
}
.drawing { width: 100%; height: 100%; background: #000; }
.vscroll { padding-left: 11px; height: 100%; display: flex; flex-direction: column; }
.vscroll i { width: 5px; height: 37%; margin-top: 427px; border-radius: 3px; background: #868686; }
.hscroll { padding-top: 11px; }
.hscroll i { display: block; height: 5px; width: 1116px; margin-left: 701px; border-radius: 3px; background: #868686; }

/* Right docks */
.dock { width: 348px; padding: 1px 0 4px 6px; display: flex; flex-direction: column; overflow: hidden; }
.docktitle { flex: none; height: 28px; display: flex; align-items: center; padding-left: 4px; background: #d9d9d9; border: 1px solid #b8b8b8; border-right: 0; color: #000; }
.docktitle h2 { flex: 1; padding-top: 4px; }
.docktitle button { width: 14px; margin-right: 17px; color: #333; }
.docktitle button:last-child { margin-right: 0; }
.docktitle svg { width: 14px; height: 14px; }
.penbody { flex: 1 1 554px; min-height: 0; padding: 30px 4px 21px 14px; display: flex; flex-direction: column; gap: 23px; }
.penpick { display: flex; align-items: center; gap: 11px; padding: 0 15px; }
.mini { width: 17px; height: 17px; border: 1px solid #ccc; border-radius: 3px; background: #fdfdfd; font-size: 12px; line-height: 12px; color: #666; }
.rainbow { width: 12px; height: 9px; border: 1px solid #000; background: linear-gradient(90deg, #0d6, #fd0 50%, #f05); box-shadow: inset 0 -3px #04f6; }
.wide { flex: 1; height: 30px; border: 1px solid #e6e6e6; border-bottom-color: #868686; border-radius: 0; background: #fff; }
.penlist { flex: 1; background: #fff; border: 1px solid #868a92; }
.filter { flex: none; height: 27px; margin: 5px 0 10px 3px; padding: 0 2px; border: 0; border-bottom: 1px solid #868686; background: #fff; width: auto; min-width: 0; outline: 0; }
.filter::placeholder { color: #808080; opacity: 1; }
.layerbtns { display: flex; gap: 20px; padding-left: 11px; }
.layerbtns button { flex: none; width: 29px; height: 28px; border: 1px solid #d0d0d0; border-radius: 4px; background: #fdfdfd; }
.layerbtns svg, .layers svg { width: 20px; height: 20px; }
.pale { color: #c8c8c8; }
.layers { flex: 1 1 571px; min-height: 0; margin: 10px 0 0 2px; border: 1px solid #868a92; border-right: 0; background: #fff; }
.layers table { width: 100%; border-collapse: collapse; table-layout: fixed; }
.layers td, .layers th { height: 37px; padding: 0; border-bottom: 1px solid #d4d4d4; border-right: 1px solid #d4d4d4; text-align: left; white-space: nowrap; }
.layers td { width: 28px; padding-left: 2px; }
.layers td svg { margin: 0 auto; }
.layers .color { background: #000; }
.layers .name, .layers th { width: auto; padding: 2px 0 0 3px; border-right: 0; }
.layers th { font-weight: 700; }
.tabs { flex: none; display: flex; height: 26px; margin: 2px 0 8px; padding-left: 2px; border-top: 1px solid #a8a8a8; }
.tabs button { flex: none; width: 145px; height: 24px; background: #f3f3f3; border: 1px solid #e2e2e2; border-top: 0; font-size: 16px; }
.tabs button:nth-child(2) { width: 100px; padding-left: 2px; }
.tabs .active { flex: 1; height: 26px; margin-top: -1px; border-right: 0; background: #f9f9f9; padding-left: 12px; }
.log { flex: none; height: 91px; margin: 4px 0 0 2px; padding: 5px 4px; background: #fff; border-bottom: 1px solid #868686; font: 15px/19px "Noto Sans", "Open Sans", sans-serif; white-space: nowrap; }
.cmdlabel { height: 24px; padding-left: 1px; line-height: 24px; font-size: 16px; }
.cmdrow { display: flex; align-items: center; gap: 3px; padding-left: 4px; }
.cmdrow input { flex: 1; min-width: 0; height: 24px; border: 0; background: #fff; outline: 0; }
.cmdrow button { width: 12px; height: 16px; border: 1px solid #ccc; border-right: 0; border-radius: 4px 0 0 4px; background: #fdfdfd; }
.cmdrow svg { width: 8px; height: 16px; }

/* Status bar */
.status { height: 64px; padding: 4px 0 0; display: flex; }
.cellbox { display: grid; grid-template-rows: 30px 28px; align-items: center; border-right: 1px solid #d0d0d0; white-space: nowrap; }
.abs { width: 183px; padding-left: 6px; border-color: #999; }
.rel { width: 202px; padding-left: 6px; grid-template-columns: 27px 1fr; }
.mouse { width: 305px; grid-template-rows: 1fr; padding-left: 127px; }
.mouse svg { width: 52px; height: 56px; }
.sel { width: 171px; padding-left: 5px; grid-template-columns: 67px 1fr; }
.layer { width: 118px; padding-left: 4px; }
.gridst { width: 100px; padding-left: 8px; }
```
